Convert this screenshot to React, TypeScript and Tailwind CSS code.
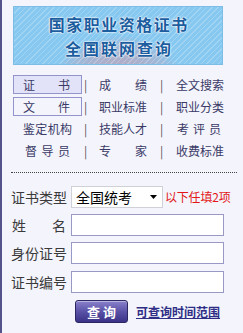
import React from 'react';

const NAV_ROWS: { a: string; b: string; c: string; box?: boolean; active?: boolean; aPad?: string; cPad?: string }[] = [
  { a: '证书', b: '成绩', c: '全文搜索', box: true, active: true },
  { a: '文件', b: '职业标准', c: '职业分类', box: true },
  { a: '鉴定机构', b: '技能人才', c: '考评员', aPad: 'px-[10px]', cPad: 'pl-[1px] pr-[3px]' },
  { a: '督导员', b: '专家', c: '收费标准', aPad: 'px-[12px]' },
];

const Spread: React.FC<{ text: string; className?: string }> = ({ text, className }) => (
  <div className={`flex justify-between ${className ?? ''}`}>
    {text.split('').map((ch, i) => (
      <span key={i}>{ch}</span>
    ))}
  </div>
);

export default function App() {
  return (
    <div
      className="w-[243px] h-[333px] bg-[#f4f4fc] border-l-2 border-[#54548a] text-[#333] overflow-hidden"
      style={{ fontFamily: '"Noto Sans CJK SC", "Noto Sans", sans-serif' }}
    >
      {/* Banner */}
      <div className="ml-[11px] mt-[6px] w-[210px] h-[59px] border border-[#7cbde8] bg-[#86c8f0] bg-[repeating-linear-gradient(135deg,rgba(255,255,255,0.22)_0px,rgba(255,255,255,0.22)_1px,transparent_1px,transparent_4px),radial-gradient(ellipse_at_50%_135%,rgba(225,140,150,0.7)_0%,rgba(225,140,150,0.25)_35%,transparent_45%)] flex flex-col items-center justify-center gap-[4px] text-[16px] leading-[20px] font-bold text-[#1b5d9e] [text-shadow:0_0_2px_#fff,0_0_2px_#fff,0_0_1px_#fff]">
        <div className="tracking-[1.5px] pl-[1.5px]">国家职业资格证书</div>
        <div className="tracking-[2px] pl-[2px]">全国联网查询</div>
      </div>

      {/* Nav links */}
      <div className="ml-[11px] mt-[10px] flex flex-col gap-[3px] text-[12px] leading-[17px] text-[#3a3a66]">
        {NAV_ROWS.map((row, i) => (
          <div key={i} className="flex items-center h-[19px]">
            {row.box ? (
              <div
                className={`w-[69px] h-[19px] border border-[#9494cc] flex items-center ${
                  row.active ? 'bg-[#e2e2f8]' : 'bg-[#f4f4fc]'
                }`}
              >
                <Spread text={row.a} className="w-full pl-[9px] pr-[11px]" />
              </div>
            ) : (
              <Spread text={row.a} className={`w-[69px] ${row.aPad ?? ''}`} />
            )}
            <div className="w-[17px] pl-[2px] text-[#555]">|</div>
            <Spread text={row.b} className="w-[48px]" />
            <div className="w-[29px] text-center text-[#555]">|</div>
            <Spread text={row.c} className={`w-[48px] ${row.cPad ?? ''}`} />
          </div>
        ))}
      </div>

      {/* Divider */}
      <div className="ml-[9px] mt-[12px] w-[226px] border-t border-dotted border-[#444]" />

      {/* Form */}
      <div className="ml-[9px] mt-[13px] flex flex-col text-[14px] leading-[18px] text-[#3a3a3a]">
        <div className="flex items-center h-[22px]">
          <div className="w-[60px]">证书类型</div>
          <div className="relative w-[92px] h-[22px]">
            <select className="appearance-none w-full h-full bg-white border border-[#d0d0d8] pl-[4px] text-[14px] text-black outline-none">
              <option>全国统考</option>
            </select>
            <svg className="absolute right-[6px] top-[9px] pointer-events-none" width="7" height="4" viewBox="0 0 7 4">
              <path d="M0 0H7L3.5 4Z" fill="#000" />
            </svg>
          </div>
          <div className="ml-[2px] text-[12px] text-[#e21818] tracking-[-0.2px]">以下任填2项</div>
        </div>

        <div className="flex items-center h-[22px] mt-[6px]">
          <Spread text="姓名" className="w-[55px] pl-[1px]" />
          <div className="w-[5px]" />
          <input className="w-[153px] h-[22px] bg-white border border-[#9a98c4] outline-none" />
        </div>
        <div className="flex items-center h-[22px] mt-[6px]">
          <div className="w-[60px]">身份证号</div>
          <input className="w-[153px] h-[22px] bg-white border border-[#9a98c4] outline-none" />
        </div>
        <div className="flex items-center h-[22px] mt-[7px]">
          <div className="w-[60px]">证书编号</div>
          <input className="w-[153px] h-[22px] bg-white border border-[#9a98c4] outline-none" />
        </div>

        <div className="flex items-center mt-[7px] ml-[64px]">
          <button className="w-[53px] h-[23px] rounded-[3px] border border-[#2c2662] bg-[linear-gradient(#8a82cc,#5a52a6_50%,#3a3286)] text-white text-[13px] font-bold tracking-[3px] pl-[3px] shadow-[inset_0_1px_0_rgba(255,255,255,0.4)]">
            查询
          </button>
          <a href="#" className="ml-[8px] text-[12px] font-bold text-[#2e2e86] underline">
            可查询时间范围
          </a>
        </div>
      </div>
    </div>
  );
}
